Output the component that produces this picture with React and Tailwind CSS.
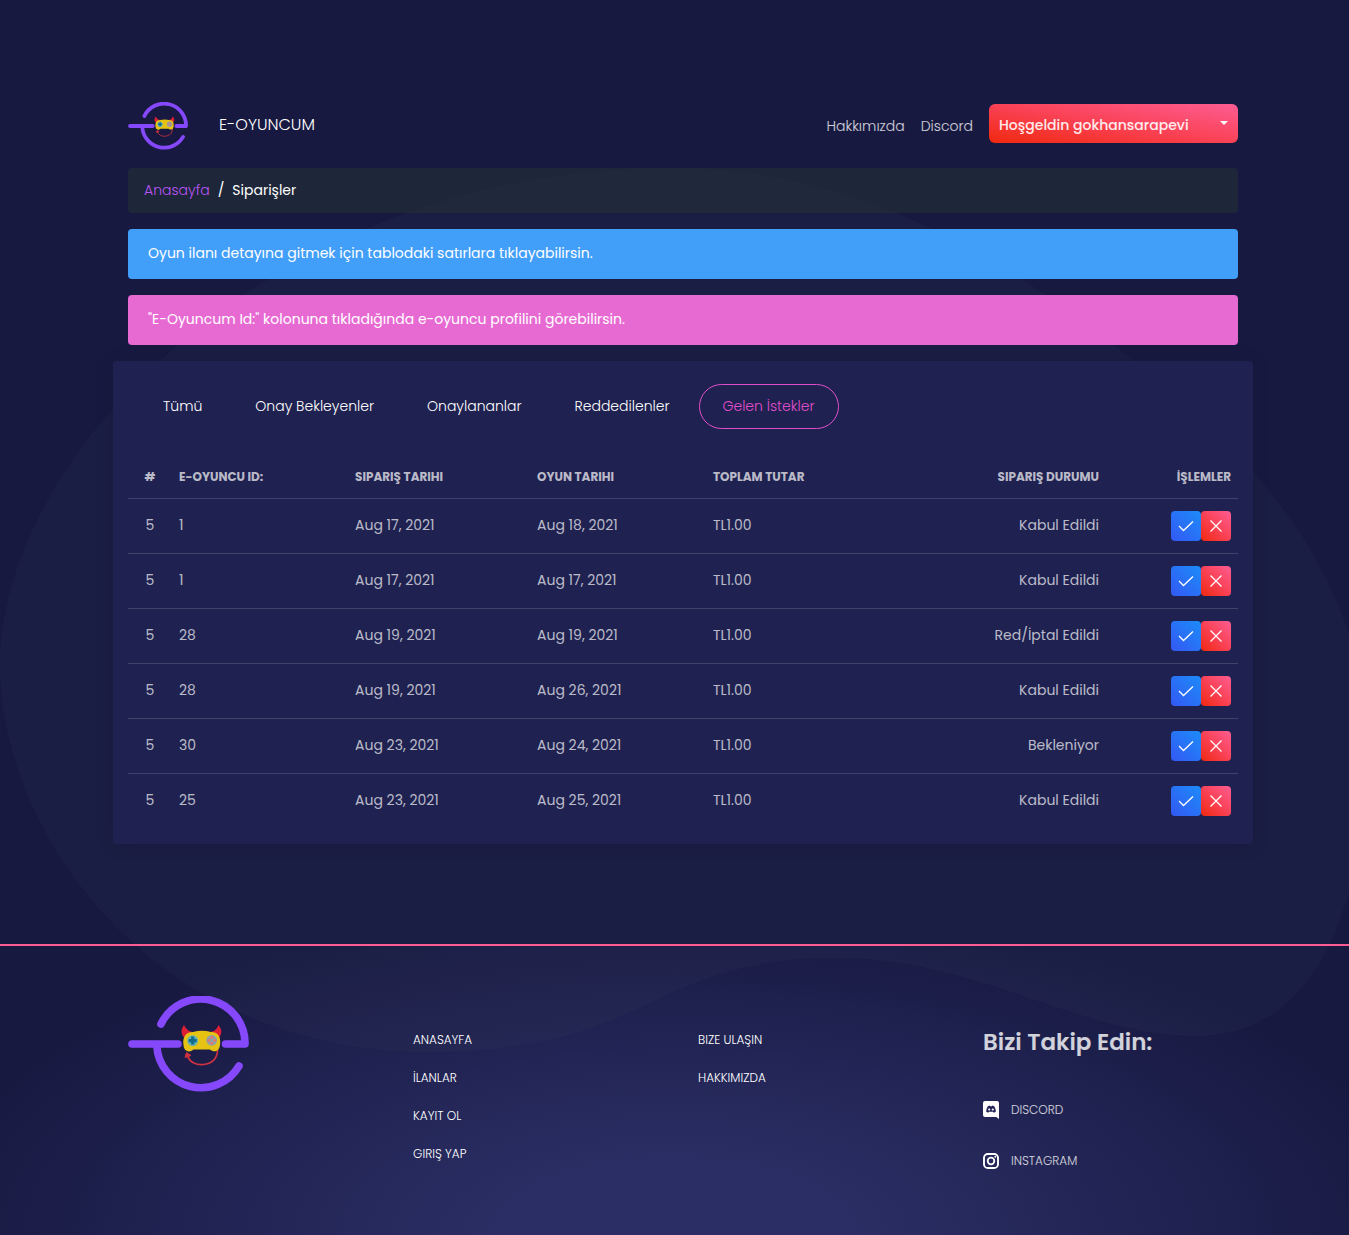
import React from "react";

const orders = [
  { player: "1", ordered: "Aug 17, 2021", played: "Aug 18, 2021", status: "Kabul Edildi" },
  { player: "1", ordered: "Aug 17, 2021", played: "Aug 17, 2021", status: "Kabul Edildi" },
  { player: "28", ordered: "Aug 19, 2021", played: "Aug 19, 2021", status: "Red/İptal Edildi" },
  { player: "28", ordered: "Aug 19, 2021", played: "Aug 26, 2021", status: "Kabul Edildi" },
  { player: "30", ordered: "Aug 23, 2021", played: "Aug 24, 2021", status: "Bekleniyor" },
  { player: "25", ordered: "Aug 23, 2021", played: "Aug 25, 2021", status: "Kabul Edildi" },
];

const tabs = ["Tümü", "Onay Bekleyenler", "Onaylananlar", "Reddedilenler", "Gelen İstekler"];

function Logo({ className }) {
  return (
    <svg viewBox="0 0 121 96" className={className} role="img" aria-label="E-Oyuncum">
      <g fill="none" stroke="#8549fb" strokeWidth="7.6" strokeLinecap="round" strokeLinejoin="round">
        <path d="M33 28A44.2 44.2 0 0 1 117 48H97.5" />
        <path d="M4 48H50" />
        <path d="M28.8 50A44.2 44.2 0 0 0 111 70" />
      </g>
      <path d="M56 29C59 35 62 35 64 36L58 43C53 40 52 34 56 29ZM90.500 29C88 35 85 35 83 36L89 43C94 40 95 34 90.500 29Z" fill="#dc1f34" />
      <path d="M89.500 54C90 72 62 73 59.500 59" fill="none" stroke="#cf3140" strokeWidth="1.700" />
      <path d="M57 61.500L58.500 56.500L63 59.500Z" fill="#cf3140" stroke="#cf3140" />
      <path d="M65 36Q74 33.500 83 36C91 36 93 42 92 49C91 57 85 56 82 53.500H65.500C62 57 56 56 55.500 49C54.500 42 57 36 65 36Z" fill="#e6c312" />
      <circle cx="64.700" cy="44.600" r="5.400" fill="#67b5b4" />
      <path d="M64.700 40.600V48.600M60.700 44.600H68.700" stroke="#136c8b" strokeWidth="3.200" />
      <circle cx="83.700" cy="44.300" r="5.400" fill="#8aa3ac" />
      <g fill="#e47770">
        <circle cx="83.700" cy="41.300" r="1.500" />
        <circle cx="83.700" cy="47.300" r="1.500" />
        <circle cx="80.700" cy="44.300" r="1.500" />
        <circle cx="86.700" cy="44.300" r="1.500" />
      </g>
    </svg>
  );
}

function Backdrop() {
  return (
    <svg
      viewBox="0 0 1349 1235"
      preserveAspectRatio="none"
      className="pointer-events-none absolute inset-0 h-full w-full"
      aria-hidden="true"
    >
      <path
        d="M670 168C900 168 1060 300 1174 394C1300 500 1366 620 1366 740C1366 920 1310 1036 1196 1036C1080 1036 980 958 835 958C650 958 650 1052 430 1052C150 1052 0 830 0 665C0 450 280 168 670 168Z"
        fill="#39435a"
        fillOpacity="0.14"
      />
    </svg>
  );
}

function DiscordIcon() {
  return (
    <svg viewBox="0 0 16 18" className="h-[18px] w-4" aria-hidden="true">
      <path
        fillRule="evenodd"
        fill="#fff"
        d="M2 0H14Q16 0 16 2V18L13.300 16H2Q0 16 0 14V2Q0 0 2 0ZM3.200 10.800Q3.200 7.500 4.800 5.200L6.700 4.600L7.200 5.300H8.800L9.300 4.600L11.200 5.200Q12.800 7.500 12.800 10.800L10.800 11.800L10 10.800H6L5.200 11.800ZM6.200 7.400A1.100 1.100 0 1 0 6.200 9.600A1.100 1.100 0 1 0 6.200 7.400ZM9.800 7.400A1.100 1.100 0 1 0 9.800 9.600A1.100 1.100 0 1 0 9.800 7.400Z"
      />
    </svg>
  );
}

function InstagramIcon() {
  return (
    <svg viewBox="0 0 16 16" className="size-4" fill="none" stroke="#fff" aria-hidden="true">
      <rect x="1" y="1" width="14" height="14" rx="3.800" strokeWidth="1.900" />
      <circle cx="8" cy="8" r="3.300" strokeWidth="1.800" />
      <circle cx="12.300" cy="3.700" r="1" fill="#fff" stroke="none" />
    </svg>
  );
}

function FooterLinks({ items }) {
  return (
    <ul className="flex flex-col gap-5 px-[15px] pt-[35px] text-xs leading-[18px] font-light text-white">
      {items.map((item) => (
        <li key={item}>
          <a href="#">{item}</a>
        </li>
      ))}
    </ul>
  );
}

export default function App() {
  return (
    <div
      lang="tr"
      className="relative flex min-h-screen flex-col overflow-hidden bg-[#171941] font-['Poppins','Inter',sans-serif] text-sm text-white/70"
    >
      <div className="flex-1 pt-[100px] pb-[100px] pl-[17px]">
        <div className="relative z-10 mx-auto max-w-[1140px]">
          <div className="px-[15px]">
            <header className="flex h-[52px] items-center">
              <a href="#" className="flex items-center gap-[31px] text-base text-white">
                <Logo className="h-12 w-[60px]" />
                <span className="pb-0.5 font-light">E-OYUNCUM</span>
              </a>
              <nav className="ml-auto flex items-center gap-4">
                <a href="#" className="font-light text-white/80">Hakkımızda</a>
                <a href="#" className="font-light text-white/80">Discord</a>
                <button
                  type="button"
                  aria-haspopup="menu"
                  className="mb-1.5 flex h-[39px] w-[249px] items-center justify-between rounded-md bg-[linear-gradient(to_top_right,#f0280f,#fa4256_50%,#fd5d93)] px-2.5 text-white/90"
                >
                  <span className="pt-1 font-medium">Hoşgeldin gokhansarapevi</span>
                  <span className="border-x-4 border-t-4 border-x-transparent border-t-white" />
                </button>
              </nav>
            </header>

            <nav aria-label="breadcrumb" className="mt-4 rounded bg-[#253331]/50 px-4 py-3 leading-[21px]">
              <ol className="flex gap-2">
                <li>
                  <a href="#" className="font-light text-[#ba54f5]">Anasayfa</a>
                </li>
                <li aria-hidden="true" className="text-white">/</li>
                <li aria-current="page" className="text-white">Siparişler</li>
              </ol>
            </nav>

            <div role="alert" className="mt-4 rounded bg-[#419ef9] px-5 pt-[13px] pb-[15px] leading-[22px] text-white">
              Oyun ilanı detayına gitmek için tablodaki satırlara tıklayabilirsin.
            </div>
            <div role="alert" className="mt-4 rounded bg-[#e76ad3] px-5 pt-[13px] pb-[15px] leading-[22px] text-white">
              "E-Oyuncum Id:" kolonuna tıkladığında e-oyuncu profilini görebilirsin.
            </div>
          </div>

          <main className="mt-4 rounded bg-[#1f2251] px-[15px] pt-[23px] pb-4 shadow-[0_1px_20px_rgba(0,0,0,0.1)]">
            <div role="tablist" className="flex gap-[5px] pl-[11px]">
              {tabs.map((tab, i) => (
                <button
                  key={tab}
                  type="button"
                  role="tab"
                  aria-selected={i === 4}
                  className={
                    i === 4
                      ? "h-[45px] rounded-full border border-[#e14eca] px-[23px] pb-0.5 font-light text-[#e14eca]"
                      : "h-[45px] rounded-full border border-transparent px-[23px] pb-0.5 font-light text-white"
                  }
                >
                  {tab}
                </button>
              ))}
            </div>

            <table className="mt-[25px] w-full table-fixed border-collapse text-left">
              <colgroup>
                <col className="w-11" />
                <col className="w-[176px]" />
                <col className="w-[182px]" />
                <col className="w-44" />
                <col />
                <col />
                <col className="w-[132px]" />
              </colgroup>
              <thead>
                <tr className="h-11 text-xs whitespace-nowrap">
                  <th className="px-[7px] pt-0.5 text-center font-bold">#</th>
                  <th className="px-[7px] pt-0.5 font-bold">E-OYUNCU ID:</th>
                  <th className="px-[7px] pt-0.5 font-bold">SIPARIŞ TARIHI</th>
                  <th className="px-[7px] pt-0.5 font-bold">OYUN TARIHI</th>
                  <th className="px-[7px] pt-0.5 font-bold">TOPLAM TUTAR</th>
                  <th className="px-[7px] pt-0.5 text-right font-bold">SIPARIŞ DURUMU</th>
                  <th className="px-[7px] pt-0.5 text-right font-bold">İŞLEMLER</th>
                </tr>
              </thead>
              <tbody>
                {orders.map((order, i) => (
                  <tr key={i} className="h-[55px] border-t border-white/15">
                    <td className="px-[7px] pb-0.5 text-center">5</td>
                    <td className="px-[7px] pb-0.5">{order.player}</td>
                    <td className="px-[7px] pb-0.5">{order.ordered}</td>
                    <td className="px-[7px] pb-0.5">{order.played}</td>
                    <td className="px-[7px] pb-0.5">TL1.00</td>
                    <td className="px-[7px] pb-0.5 text-right">{order.status}</td>
                    <td className="px-[7px]">
                      <div className="flex justify-end">
                        <button
                          type="button"
                          aria-label="Onayla"
                          className="grid size-[30px] place-items-center rounded bg-[linear-gradient(to_top_right,#3358f4,#1d8cf8)]"
                        >
                          <svg viewBox="0 0 16 16" className="size-4" fill="none" stroke="#fff" strokeWidth="1.300" aria-hidden="true">
                            <path d="M1 8L5.500 12.500L15 3.500" />
                          </svg>
                        </button>
                        <button
                          type="button"
                          aria-label="Reddet"
                          className="grid size-[30px] place-items-center rounded bg-[linear-gradient(to_top_right,#f0280f,#fa4256_50%,#fd5d93)]"
                        >
                          <svg viewBox="0 0 16 16" className="size-4" fill="none" stroke="#fff" strokeWidth="1.300" aria-hidden="true">
                            <path d="M2.500 2.500L13.500 13.500M13.500 2.500L2.500 13.500" />
                          </svg>
                        </button>
                      </div>
                    </td>
                  </tr>
                ))}
              </tbody>
            </table>
          </main>
        </div>
      </div>

      <hr className="relative z-10 h-0.5 border-0 bg-[#fd5d93]" />
      <footer className="bg-[radial-gradient(ellipse_at_bottom,#2b2e64_18%,#171941_80%)] pt-[50px] pb-[62px] pl-[17px]">
        <div className="relative z-10 mx-auto grid max-w-[1140px] grid-cols-4">
          <div className="px-[15px]">
            <Logo className="h-24 w-[121px]" />
          </div>
          <FooterLinks items={["ANASAYFA", "İLANLAR", "KAYIT OL", "GIRIŞ YAP"]} />
          <FooterLinks items={["BIZE ULAŞIN", "HAKKIMIZDA"]} />
          <div className="px-[15px] pt-[30px]">
            <h3 className="text-[23px] leading-8 font-semibold text-white/80">Bizi Takip Edin:</h3>
            <ul className="mt-10 flex flex-col gap-[27px] text-xs leading-6">
              <li>
                <a href="#" className="flex items-center gap-3 font-light text-white/80">
                  <DiscordIcon />
                  DISCORD
                </a>
              </li>
              <li>
                <a href="#" className="flex items-center gap-3 font-light text-white/80">
                  <InstagramIcon />
                  INSTAGRAM
                </a>
              </li>
            </ul>
          </div>
        </div>
      </footer>
      <Backdrop />
    </div>
  );
}
